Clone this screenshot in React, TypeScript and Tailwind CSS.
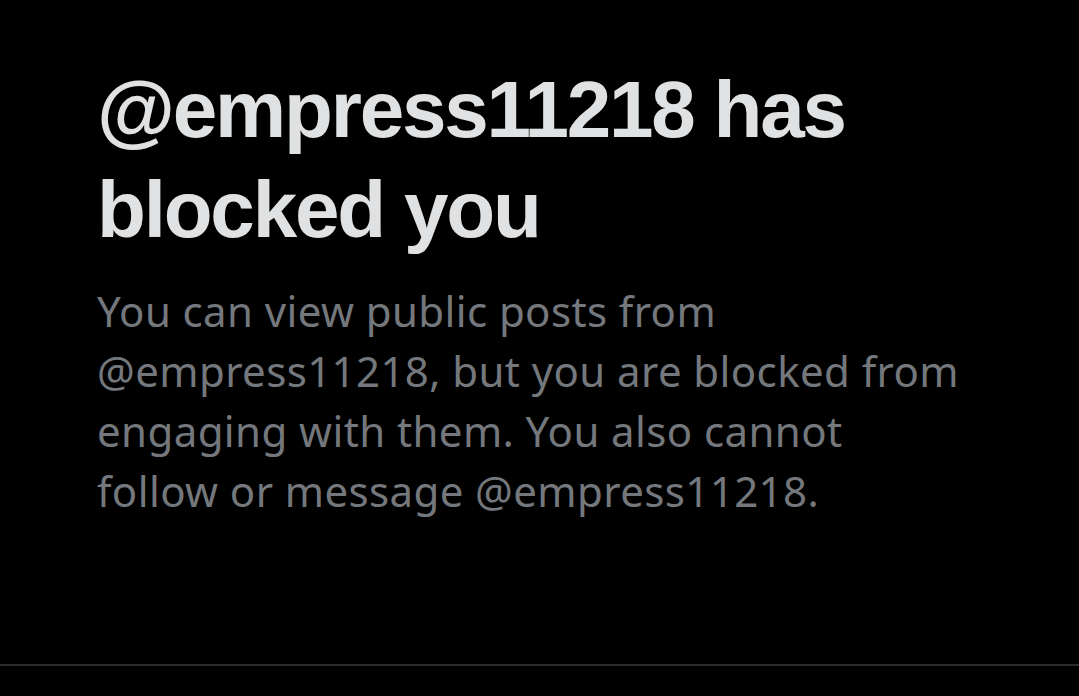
export default function App() {
  const handle = "@empress11218"

  return (
    <div className="w-[1079px] h-[696px] bg-black flex flex-col overflow-hidden">
      {/* Blocked notice */}
      <div className="flex-1 pl-[97px] pr-[40px] pt-[60px]">
        <h1 className="text-[80px] leading-[100px] font-bold tracking-[-2.2px] text-[#e0e1e2] font-['Liberation_Sans',Arial,sans-serif]">
          {handle} has
          <br />
          blocked you
        </h1>
        <p className="mt-[21px] text-[42px] leading-[60px] tracking-[0.4px] text-[#74787d] font-['Noto_Sans',sans-serif]">
          You can view public posts from
          <br />
          {handle}, but you are blocked from
          <br />
          engaging with them. You also cannot
          <br />
          follow or message {handle}.
        </p>
      </div>

      {/* Divider */}
      <div className="h-[2px] bg-[#2a2b2d] mb-[30px]" />
    </div>
  )
}
